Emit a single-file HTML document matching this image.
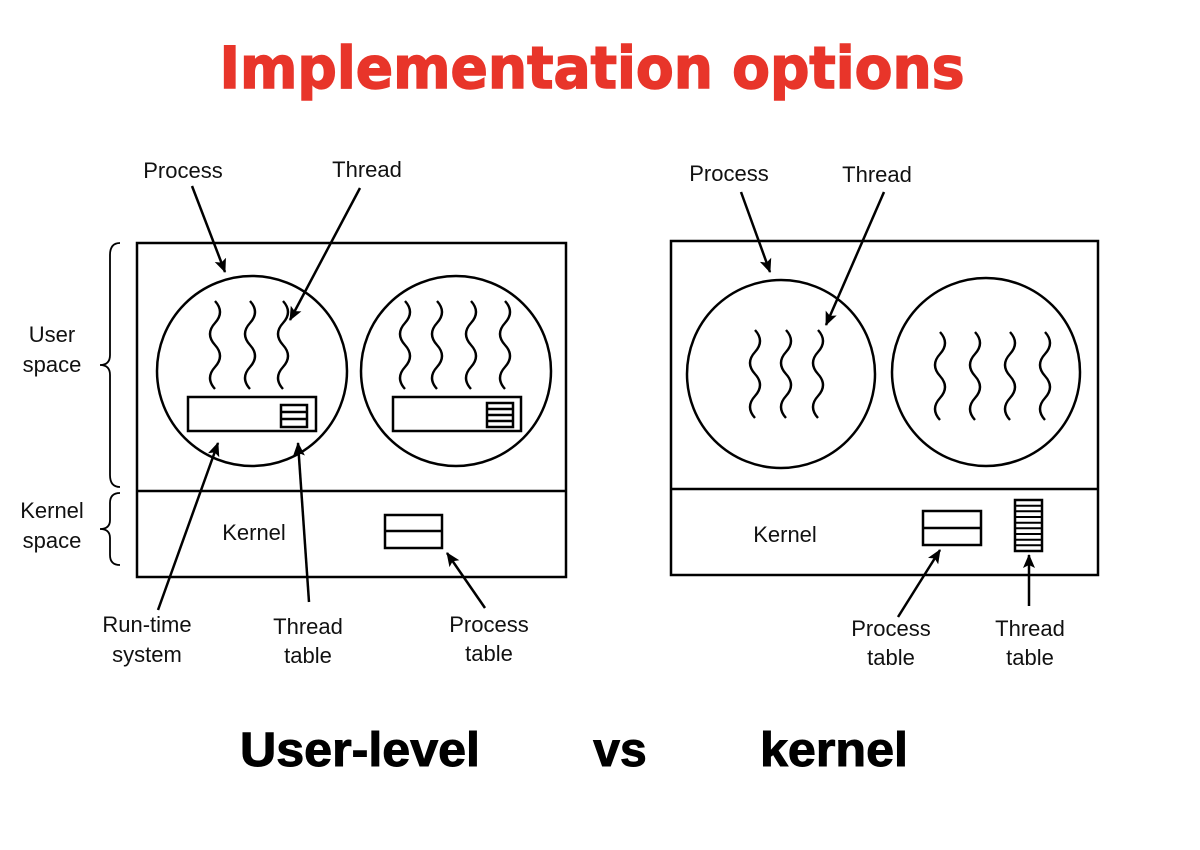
<!DOCTYPE html>
<html><head><meta charset="utf-8"><style>
html,body{margin:0;padding:0;background:#fff;}
svg{display:block;}
.l{font-family:"Liberation Sans",sans-serif;font-size:22px;fill:#111;text-anchor:middle;}
</style></head><body>
<svg width="1200" height="850" viewBox="0 0 1200 850" xmlns="http://www.w3.org/2000/svg">
<defs>
<marker id="a" markerWidth="14" markerHeight="14" refX="13" refY="6" orient="auto" markerUnits="userSpaceOnUse" viewBox="0 0 14 12">
<path d="M0,0 L14,6 L0,12 L3,6 z" fill="#000"/></marker>
<path id="w" d="M0 0 q 10 11 0 22 q -10 11 0 22 q 10 11 0 22 q -10 11 0 22" fill="none" stroke="#000" stroke-width="2.4"/>
</defs>
<text x="592" y="88" font-family="DejaVu Sans,sans-serif" font-size="58" font-weight="bold" fill="#e8352a" text-anchor="middle" textLength="745" lengthAdjust="spacingAndGlyphs" stroke="#e8352a" stroke-width="1.5">Implementation options</text>

<g fill="none" stroke="#000" stroke-width="2.5">
<rect x="137" y="243" width="429" height="334"/>
<line x1="137" y1="491" x2="566" y2="491"/>
<circle cx="252" cy="371" r="95"/>
<circle cx="456" cy="371" r="95"/>
<rect x="188" y="397" width="128" height="34"/>
<rect x="281" y="405" width="26" height="22"/>
<line x1="281" y1="412" x2="307" y2="412"/><line x1="281" y1="419" x2="307" y2="419"/>
<rect x="393" y="397" width="128" height="34"/>
<rect x="487" y="403" width="26" height="24"/>
<line x1="487" y1="409" x2="513" y2="409"/><line x1="487" y1="415" x2="513" y2="415"/><line x1="487" y1="421" x2="513" y2="421"/>
<rect x="385" y="515" width="57" height="33"/>
<line x1="385" y1="531" x2="442" y2="531"/>
<path d="M120 243 q-10 0 -10 12 v100 q0 10 -10 10 q10 0 10 10 v100 q0 12 10 12" stroke-width="1.8"/>
<path d="M120 493 q-10 0 -10 10 v17 q0 9 -10 9 q10 0 10 9 v17 q0 10 10 10" stroke-width="1.8"/>
<line x1="192" y1="186" x2="225" y2="272" marker-end="url(#a)"/>
<line x1="360" y1="188" x2="290" y2="320" marker-end="url(#a)"/>
<line x1="158" y1="610" x2="218" y2="443" marker-end="url(#a)"/>
<line x1="309" y1="602" x2="298" y2="443" marker-end="url(#a)"/>
<line x1="485" y1="608" x2="447" y2="553" marker-end="url(#a)"/>

<rect x="671" y="241" width="427" height="334"/>
<line x1="671" y1="489" x2="1098" y2="489"/>
<circle cx="781" cy="374" r="94"/>
<circle cx="986" cy="372" r="94"/>
<rect x="923" y="511" width="58" height="34"/>
<line x1="923" y1="528" x2="981" y2="528"/>
<rect x="1015" y="500" width="27" height="51"/>
<g stroke-width="2"><line x1="1015" y1="505.7" x2="1042" y2="505.7"/><line x1="1015" y1="511.3" x2="1042" y2="511.3"/><line x1="1015" y1="517" x2="1042" y2="517"/><line x1="1015" y1="522.7" x2="1042" y2="522.7"/><line x1="1015" y1="528.3" x2="1042" y2="528.3"/><line x1="1015" y1="534" x2="1042" y2="534"/><line x1="1015" y1="539.7" x2="1042" y2="539.7"/><line x1="1015" y1="545.3" x2="1042" y2="545.3"/></g>
<line x1="741" y1="192" x2="770" y2="272" marker-end="url(#a)"/>
<line x1="884" y1="192" x2="826" y2="325" marker-end="url(#a)"/>
<line x1="898" y1="617" x2="940" y2="550" marker-end="url(#a)"/>
<line x1="1029" y1="606" x2="1029" y2="555" marker-end="url(#a)"/>
</g>
<use href="#w" x="215" y="301"/><use href="#w" x="250" y="301"/><use href="#w" x="283" y="301"/>
<use href="#w" x="405" y="301"/><use href="#w" x="437" y="301"/><use href="#w" x="471" y="301"/><use href="#w" x="505" y="301"/>
<use href="#w" x="755" y="330"/><use href="#w" x="786" y="330"/><use href="#w" x="818" y="330"/>
<use href="#w" x="940" y="332"/><use href="#w" x="975" y="332"/><use href="#w" x="1010" y="332"/><use href="#w" x="1045" y="332"/>

<text class="l" x="183" y="178">Process</text>
<text class="l" x="367" y="177">Thread</text>
<text class="l" x="52" y="342">User</text>
<text class="l" x="52" y="372">space</text>
<text class="l" x="52" y="518">Kernel</text>
<text class="l" x="52" y="548">space</text>
<text class="l" x="254" y="540">Kernel</text>
<text class="l" x="147" y="632">Run-time</text>
<text class="l" x="147" y="662">system</text>
<text class="l" x="308" y="634">Thread</text>
<text class="l" x="308" y="663">table</text>
<text class="l" x="489" y="632">Process</text>
<text class="l" x="489" y="661">table</text>
<text class="l" x="729" y="181">Process</text>
<text class="l" x="877" y="182">Thread</text>
<text class="l" x="785" y="542">Kernel</text>
<text class="l" x="891" y="636">Process</text>
<text class="l" x="891" y="665">table</text>
<text class="l" x="1030" y="636">Thread</text>
<text class="l" x="1030" y="665">table</text>

<g font-family="Liberation Sans,sans-serif" font-weight="bold" font-size="48" text-anchor="middle" fill="#000" stroke="#000" stroke-width="1">
<text x="360" y="766" textLength="240" lengthAdjust="spacingAndGlyphs">User-level</text>
<text x="620" y="766">vs</text>
<text x="834" y="766" textLength="148" lengthAdjust="spacingAndGlyphs">kernel</text>
</g>
</svg>
</body></html>
